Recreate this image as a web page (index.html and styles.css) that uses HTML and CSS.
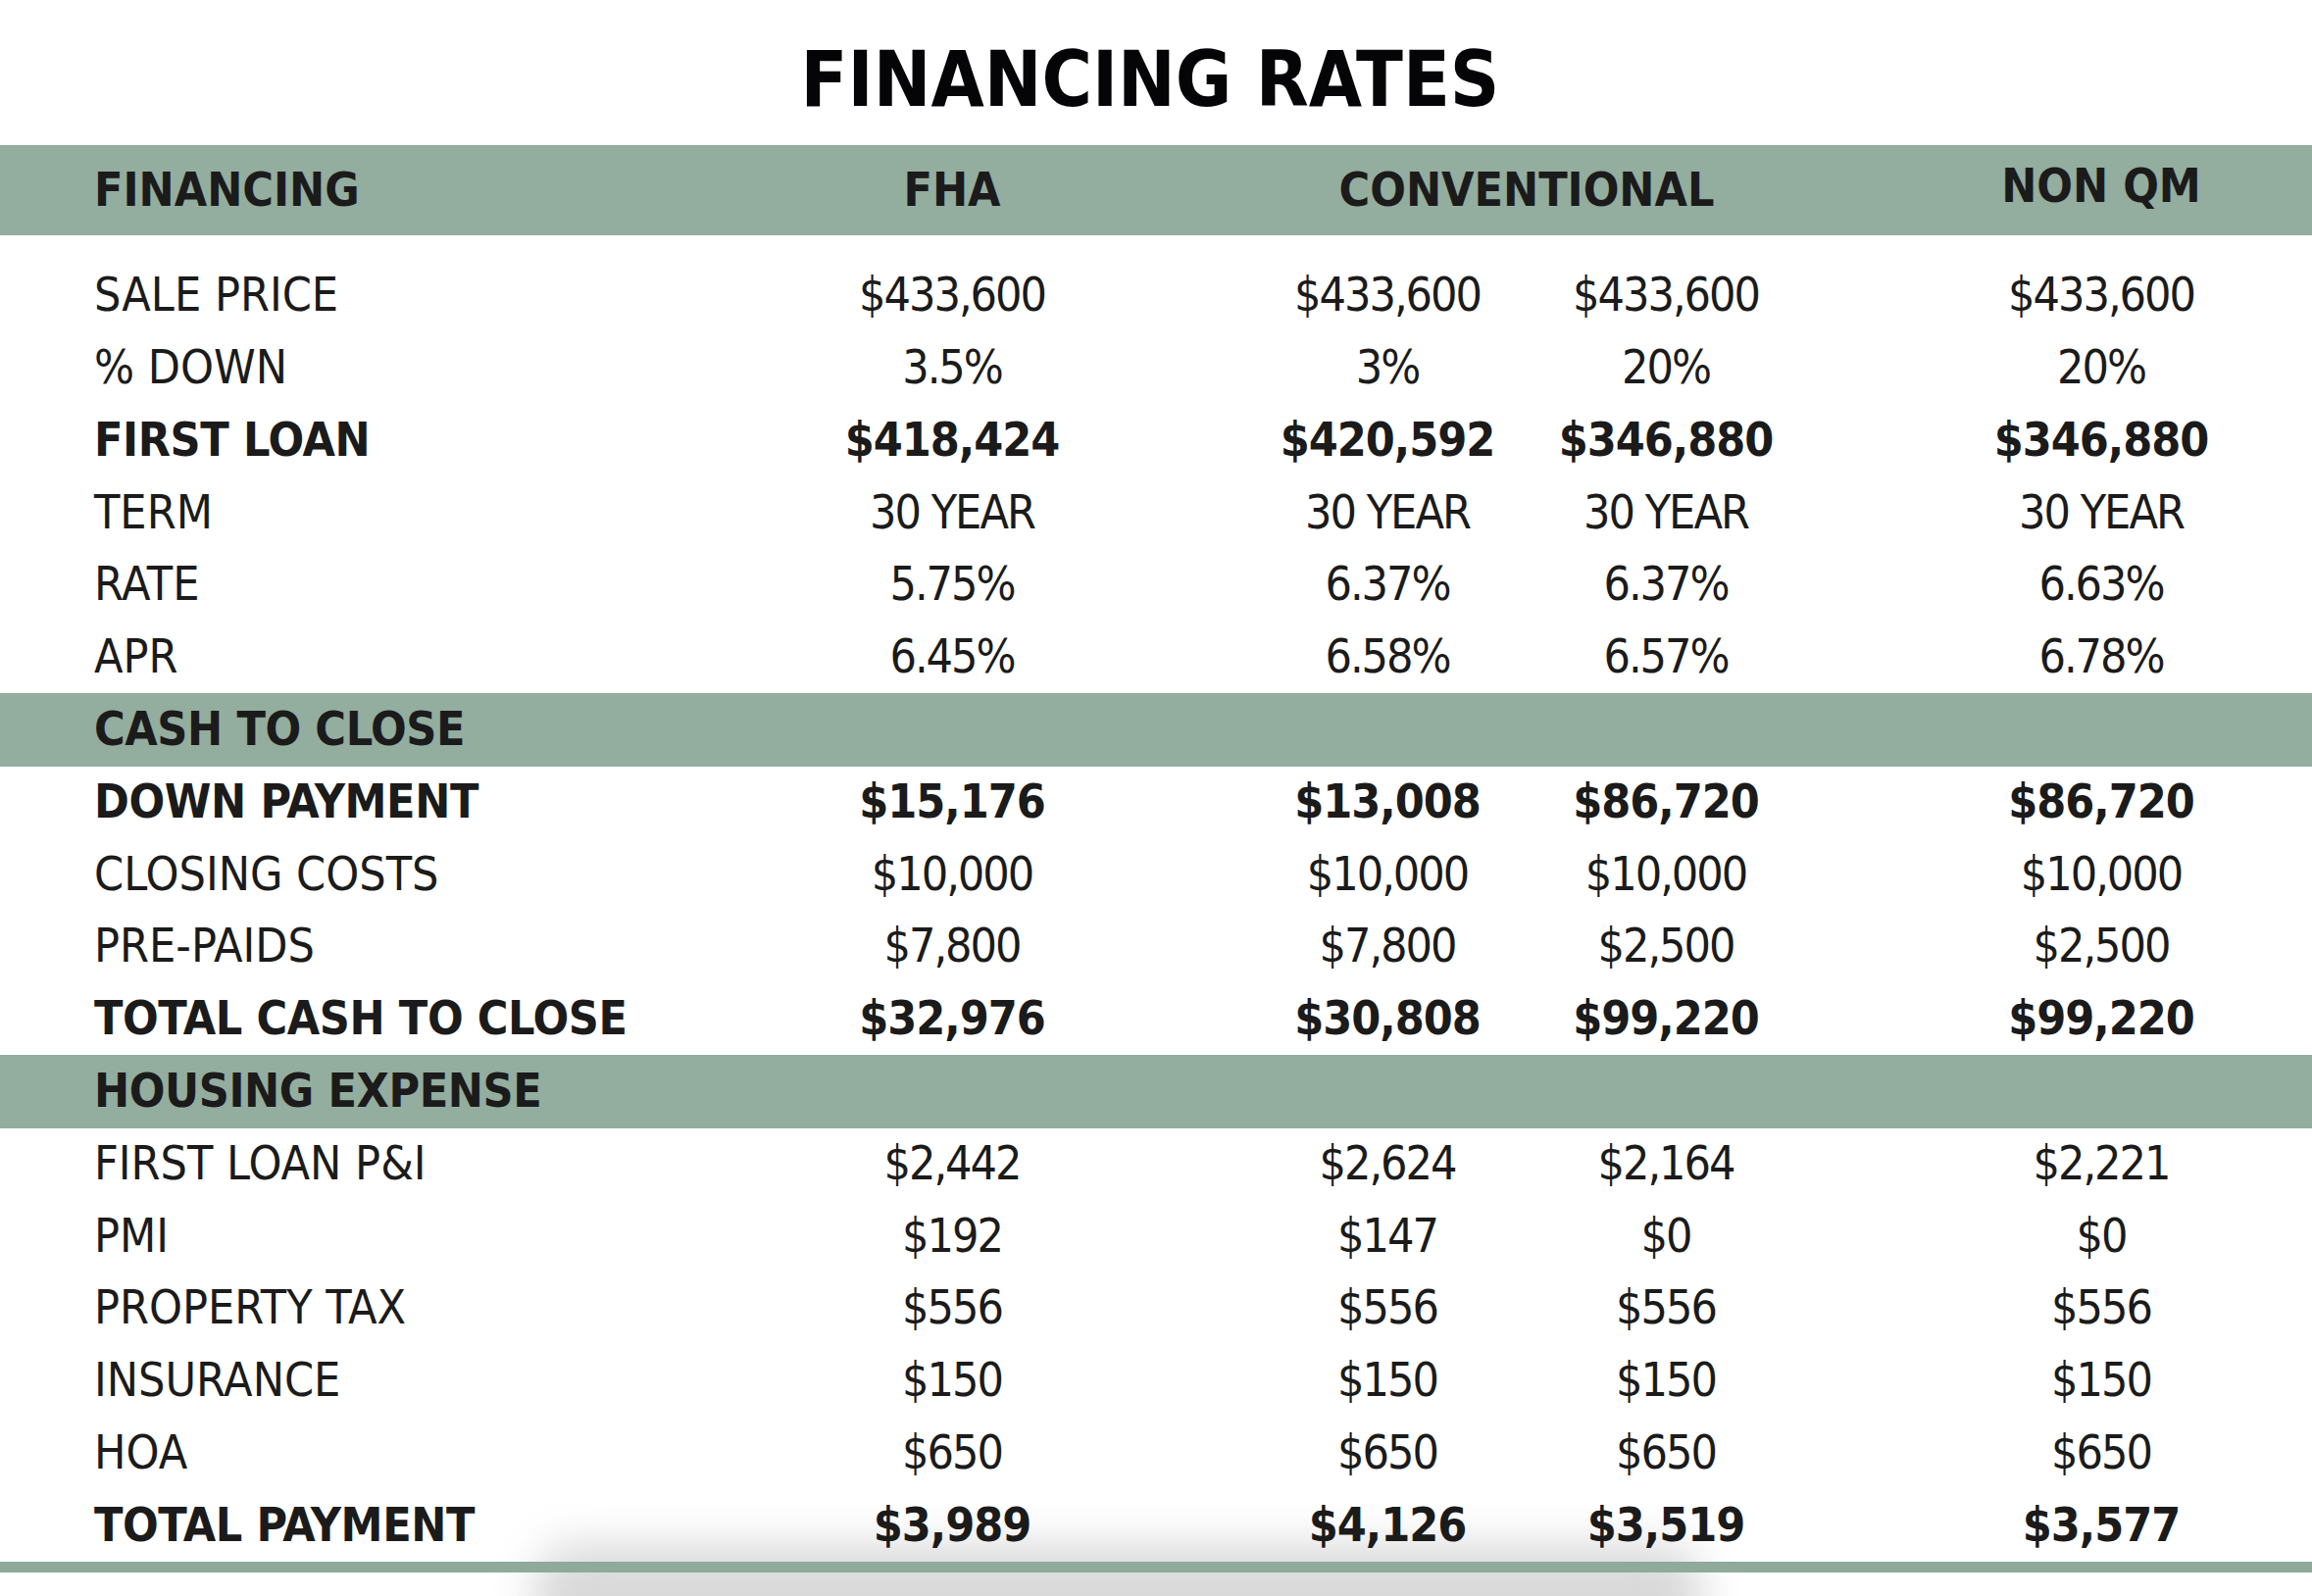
FILE: index.html
```html
<!DOCTYPE html>
<html lang="en">
<head>
<meta charset="utf-8">
<title>Financing Rates</title>
<link rel="stylesheet" href="styles.css">
</head>
<body>
<div class="shadow"></div>
<h1 class="title">FINANCING RATES</h1>
<div class="table">
  <div class="row head">
    <div class="lbl">FINANCING</div>
    <div class="c-fha">FHA</div>
    <div class="c-conv">CONVENTIONAL</div>
    <div class="c-nq nq-head">NON QM</div>
  </div>

  <div class="row">
    <div class="lbl">SALE PRICE</div>
    <div class="c-fha num">$433,600</div>
    <div class="c-c1 num">$433,600</div>
    <div class="c-c2 num">$433,600</div>
    <div class="c-nq num">$433,600</div>
  </div>
  <div class="row">
    <div class="lbl">% DOWN</div>
    <div class="c-fha num">3.5%</div>
    <div class="c-c1 num">3%</div>
    <div class="c-c2 num">20%</div>
    <div class="c-nq num">20%</div>
  </div>
  <div class="row strong">
    <div class="lbl">FIRST LOAN</div>
    <div class="c-fha num">$418,424</div>
    <div class="c-c1 num">$420,592</div>
    <div class="c-c2 num">$346,880</div>
    <div class="c-nq num">$346,880</div>
  </div>
  <div class="row">
    <div class="lbl">TERM</div>
    <div class="c-fha num">30 YEAR</div>
    <div class="c-c1 num">30 YEAR</div>
    <div class="c-c2 num">30 YEAR</div>
    <div class="c-nq num">30 YEAR</div>
  </div>
  <div class="row">
    <div class="lbl">RATE</div>
    <div class="c-fha num">5.75%</div>
    <div class="c-c1 num">6.37%</div>
    <div class="c-c2 num">6.37%</div>
    <div class="c-nq num">6.63%</div>
  </div>
  <div class="row">
    <div class="lbl">APR</div>
    <div class="c-fha num">6.45%</div>
    <div class="c-c1 num">6.58%</div>
    <div class="c-c2 num">6.57%</div>
    <div class="c-nq num">6.78%</div>
  </div>

  <div class="row band strong">
    <div class="lbl">CASH TO CLOSE</div>
  </div>

  <div class="row strong">
    <div class="lbl">DOWN PAYMENT</div>
    <div class="c-fha num">$15,176</div>
    <div class="c-c1 num">$13,008</div>
    <div class="c-c2 num">$86,720</div>
    <div class="c-nq num">$86,720</div>
  </div>
  <div class="row">
    <div class="lbl">CLOSING COSTS</div>
    <div class="c-fha num">$10,000</div>
    <div class="c-c1 num">$10,000</div>
    <div class="c-c2 num">$10,000</div>
    <div class="c-nq num">$10,000</div>
  </div>
  <div class="row">
    <div class="lbl">PRE-PAIDS</div>
    <div class="c-fha num">$7,800</div>
    <div class="c-c1 num">$7,800</div>
    <div class="c-c2 num">$2,500</div>
    <div class="c-nq num">$2,500</div>
  </div>
  <div class="row strong">
    <div class="lbl">TOTAL CASH TO CLOSE</div>
    <div class="c-fha num">$32,976</div>
    <div class="c-c1 num">$30,808</div>
    <div class="c-c2 num">$99,220</div>
    <div class="c-nq num">$99,220</div>
  </div>

  <div class="row band strong">
    <div class="lbl">HOUSING EXPENSE</div>
  </div>

  <div class="row">
    <div class="lbl">FIRST LOAN P&amp;I</div>
    <div class="c-fha num">$2,442</div>
    <div class="c-c1 num">$2,624</div>
    <div class="c-c2 num">$2,164</div>
    <div class="c-nq num">$2,221</div>
  </div>
  <div class="row">
    <div class="lbl">PMI</div>
    <div class="c-fha num">$192</div>
    <div class="c-c1 num">$147</div>
    <div class="c-c2 num">$0</div>
    <div class="c-nq num">$0</div>
  </div>
  <div class="row">
    <div class="lbl">PROPERTY TAX</div>
    <div class="c-fha num">$556</div>
    <div class="c-c1 num">$556</div>
    <div class="c-c2 num">$556</div>
    <div class="c-nq num">$556</div>
  </div>
  <div class="row">
    <div class="lbl">INSURANCE</div>
    <div class="c-fha num">$150</div>
    <div class="c-c1 num">$150</div>
    <div class="c-c2 num">$150</div>
    <div class="c-nq num">$150</div>
  </div>
  <div class="row">
    <div class="lbl">HOA</div>
    <div class="c-fha num">$650</div>
    <div class="c-c1 num">$650</div>
    <div class="c-c2 num">$650</div>
    <div class="c-nq num">$650</div>
  </div>
  <div class="row strong">
    <div class="lbl">TOTAL PAYMENT</div>
    <div class="c-fha num">$3,989</div>
    <div class="c-c1 num">$4,126</div>
    <div class="c-c2 num">$3,519</div>
    <div class="c-nq num">$3,577</div>
  </div>

  <div class="foot-bar"></div>
</div>
</body>
</html>
```

FILE: styles.css
```css
html {
  margin: 0;
  padding: 0;
  background: #ffffff;
  height: 1628px;
  overflow: hidden;
}

body {
  margin: 0;
  padding: 0;
  height: 1628px;
  overflow: hidden;
  position: relative;
  font-family: "DejaVu Sans Condensed", "DejaVu Sans", sans-serif;
  font-size: 48px;
  color: #1b1b1b;
}

.shadow {
  position: absolute;
  left: 545px;
  top: 1575px;
  width: 1190px;
  height: 130px;
  background: #d9d9d9;
  border-radius: 40px;
  filter: blur(22px);
  z-index: -1;
}

.title {
  margin: 0 0 21px 0;
  padding: 35px 12px 0 0;
  height: 92px;
  line-height: 92px;
  text-align: center;
  font-size: 78px;
  font-weight: bold;
  color: #050507;
}

.table {
  display: flex;
  flex-direction: column;
}

.row {
  display: grid;
  grid-template-columns: 746px 450px 77px 284px 284px 87px 430px;
  height: 73.82px;
  align-items: center;
  line-height: 1.2;
  white-space: nowrap;
}

.head {
  height: 92px;
  margin-bottom: 24px;
  background: #93ad9f;
  font-weight: bold;
}

.band {
  background: #93ad9f;
  box-shadow: 0 1px 0 #93ad9f;
}

.strong {
  font-weight: bold;
}

.strong .lbl {
  letter-spacing: -0.4px;
}

.lbl {
  grid-column: 1;
  padding-left: 96px;
}

.c-fha {
  grid-column: 2;
  text-align: center;
}

.c-c1 {
  grid-column: 4;
  text-align: center;
}

.c-c2 {
  grid-column: 5;
  text-align: center;
}

.c-conv {
  grid-column: 4 / 6;
  text-align: center;
}

.c-nq {
  grid-column: 7;
  text-align: center;
}

.nq-head {
  padding-bottom: 8px;
}

.num {
  letter-spacing: -2px;
}

.strong .num {
  letter-spacing: -1px;
}

.foot-bar {
  height: 11px;
  background: #8fa99b;
}
```
